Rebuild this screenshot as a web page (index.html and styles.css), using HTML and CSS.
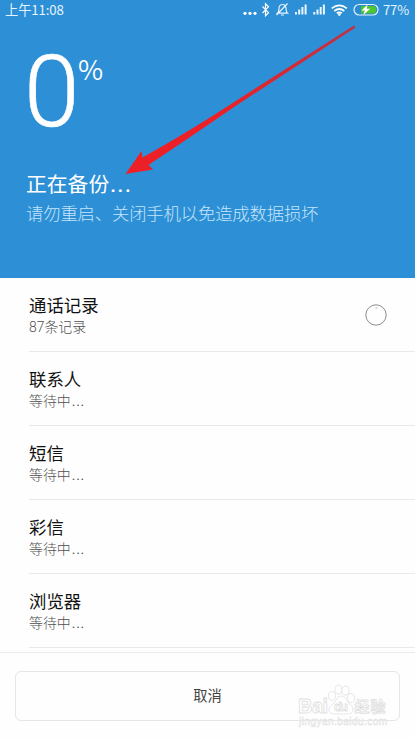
FILE: index.html
```html
<!DOCTYPE html>
<html lang="zh-CN">
<head>
<meta charset="utf-8">
<title>备份</title>
<link rel="stylesheet" href="styles.css">
</head>
<body>
<div class="screen">
  <header class="hero">
    <div class="status">
      <span class="time">上午11:08</span>
      <svg class="indicators" width="140" height="20" viewBox="243 0 140 20">
        <g fill="#fff">
          <circle cx="246" cy="13.3" r="1.6"/><circle cx="251" cy="13.3" r="1.6"/><circle cx="256" cy="13.3" r="1.6"/>
        </g>
        <path d="M263.5 6.500l6 6.200-3 3V3.800l3 3-6 6.200" fill="none" stroke="#fff" stroke-width="1.2"/>
        <path d="M278.500 13.200c1.600-1.400 1.200-3 1.500-5.200q.5-3.500 3.500-3.500t3.500 3.500c.3 2.200-.1 3.800 1.500 5.200zM282 15h3M288.500 3.500l-11 11.500" fill="none" stroke="#e4f3ff" stroke-width="1.200"/>
        <g fill="#e9f5fe">
          <path d="M296 12h2v2.500h-2zM299.200 9.500h2v5h-2zM302.400 7h2v7.500h-2zM305.600 4.500h2v10h-2z"/>
          <path d="M314.300 12h2v2.500h-2zM317.500 9.500h2v5h-2zM320.700 7h2v7.500h-2zM323.900 4.500h2v10h-2z"/>
        </g>
        <g fill="none" stroke="#fff" stroke-width="1.7">
          <path d="M332.700 8.300q7.600-6 15.200 0M335.300 11q5-4 10 0M337.800 13.300q2.500-1.800 5 0"/>
        </g>
        <circle cx="340.300" cy="14.600" r="1.300" fill="#fff"/>
        <rect x="355" y="4.500" width="24" height="10.500" rx="5.250" fill="#2b8bd0" stroke="#e5f4fa" stroke-width="1.200"/>
        <path d="M362 6.100h11.500a3.650 3.650 0 010 7.300H362z" fill="#4ec62f"/>
        <path d="M368.500 4.500l-6 6h3.300l-1.500 4.500 7-6.200h-3.500z" fill="#fff"/>
      </svg>
      <span class="level">77%</span>
    </div>
    <div class="progress"><span class="digit">0</span><span class="percent">%</span></div>
    <h1 class="headline">正在备份<span class="dots">...</span></h1>
    <p class="warning">请勿重启、关闭手机以免造成数据损坏</p>
    <svg class="arrow" width="232" height="152" viewBox="124 24 232 152">
      <defs>
        <linearGradient id="shaft" gradientUnits="userSpaceOnUse" x1="355" y1="26" x2="215" y2="115">
          <stop offset="0" stop-color="#bd3345"/><stop offset="1" stop-color="#ec2026"/>
        </linearGradient>
      </defs>
      <path d="M125.500 174L141.500 151 142.500 157.500Q190 131 235 101.500L354 25.500 355.500 27.500 237 105Q192 136 148.500 165L153 169.500z" fill="url(#shaft)"/>
    </svg>
  </header>
  <ul class="list">
    <li class="row"><div class="info"><div class="name">通话记录</div><div class="state">87条记录</div></div><svg class="spinner" width="22" height="22" viewBox="0 0 22 22"><circle cx="11" cy="11" r="10.200" fill="none" stroke="#8c8c8c"/><circle cx="11.200" cy="4" r=".7" fill="#aaa"/></svg></li>
    <li class="row"><div class="info"><div class="name">联系人</div><div class="state">等待中<span class="wait">...</span></div></div></li>
    <li class="row"><div class="info"><div class="name">短信</div><div class="state">等待中<span class="wait">...</span></div></div></li>
    <li class="row"><div class="info"><div class="name">彩信</div><div class="state">等待中<span class="wait">...</span></div></div></li>
    <li class="row"><div class="info"><div class="name">浏览器</div><div class="state">等待中<span class="wait">...</span></div></div></li>
  </ul>
  <footer class="footer">
    <button class="cancel">取消</button>
  </footer>
  <svg class="watermark" width="100" height="46" viewBox="295 683 100 46">
    <g fill="#fff" stroke="#e0e0e0" stroke-width=".8">
      <ellipse cx="332" cy="696" rx="3.500" ry="4.500"/><ellipse cx="338.500" cy="689.500" rx="3.500" ry="4.500"/>
      <ellipse cx="345.500" cy="690.500" rx="3.500" ry="4.500"/><ellipse cx="351" cy="698" rx="3.500" ry="4.500"/>
      <path d="M341 696c4 0 5 4 8 7s4 4 4 7c0 4-4 4-12 4s-12 0-12-4c0-3 2-4 5-7s3-7 7-7z"/>
      <g class="mark"><text x="298" y="713" font-size="20" textLength="30">Bai</text><text x="334" y="711" font-size="13" textLength="14">du</text><text class="cn" x="354.500" y="712" font-size="15" textLength="31">经验</text></g>
      <text class="url" x="299" y="725" font-size="10" textLength="88">jingyan.baidu.com</text>
    </g>
  </svg>
</div>
</body>
</html>
```
FILE: styles.css
```css
* { box-sizing: border-box; }
body { margin: 0; background: #fefefe; }
.screen {
  position: relative;
  width: 415px;
  height: 739px;
  overflow: hidden;
  display: flex;
  flex-direction: column;
  background: #fefefe;
  font-family: Roboto, "Noto Sans CJK SC", sans-serif;
}
.hero {
  position: relative;
  flex: none;
  height: 278px;
  background: #2d8fd5;
  color: #fff;
}
.status {
  display: flex;
  align-items: center;
  height: 20px;
  padding: 0 5px;
  font-family: "Noto Sans CJK SC", sans-serif;
  font-size: 13px;
  line-height: 20px;
  color: #e4f4ff;
}
.time { flex: 1; font-size: 13.3px; letter-spacing: -0.15px; }
.indicators { flex: none; }
.level { width: 27px; margin-left: 1px; font-size: 13px; letter-spacing: -0.1px; }
.progress { display: flex; height: 142px; padding: 20px 0 0 24px; }
.digit {
  width: 54px;
  margin-top: 1px;
  font-size: 100px;
  line-height: 101px;
  font-weight: 300;
  -webkit-text-stroke: 0.6px #fff;
}
.percent {
  font-family: "Noto Sans CJK SC", sans-serif;
  font-size: 27.5px;
  line-height: 57px;
  font-weight: 350;
}
.headline {
  display: flex;
  margin: 9px 0 0 26px;
  font-size: 20.8px;
  line-height: 28px;
  font-weight: 400;
}
.dots { margin-left: 1px; letter-spacing: 1.6px; font-weight: 500; }
.warning {
  margin: 2px 0 0 26px;
  font-size: 17.35px;
  line-height: 26px;
  font-weight: 300;
  letter-spacing: -0.15px;
  color: #c4e5fb;
  white-space: nowrap;
}
.arrow { position: absolute; left: 124px; top: 24px; }
.list { flex: none; height: 374px; margin: 0; padding: 0 0 0 29px; list-style: none; }
.row {
  display: flex;
  justify-content: space-between;
  height: 74px;
  padding: 16px 28px 0 0;
  border-bottom: 1px solid #e9e9e9;
}
.name { font-size: 17.4px; line-height: 25px; color: #111; }
.state { font-size: 13.9px; line-height: 16px; font-weight: 300; color: #505050; }
.wait { margin-left: 1px; letter-spacing: 0.8px; font-weight: 400; }
.spinner { margin-top: 10px; }
.footer {
  flex: 1;
  padding: 18px 15px;
  border-top: 1px solid #ebebeb;
}
.cancel {
  display: block;
  width: 385px;
  height: 50px;
  padding: 0;
  border: 1px solid #e6e6e6;
  border-radius: 6px;
  background: #fefefe;
  color: #444;
  font: 14.3px/48px Roboto, "Noto Sans CJK SC", sans-serif;
}
.watermark { position: absolute; left: 295px; top: 683px; }
.mark { font-family: "Liberation Sans", sans-serif; font-weight: 700; }
.cn { font-family: "Noto Sans CJK SC", sans-serif; }
.url { font-family: "Liberation Sans", sans-serif; stroke-width: .5; }
```
